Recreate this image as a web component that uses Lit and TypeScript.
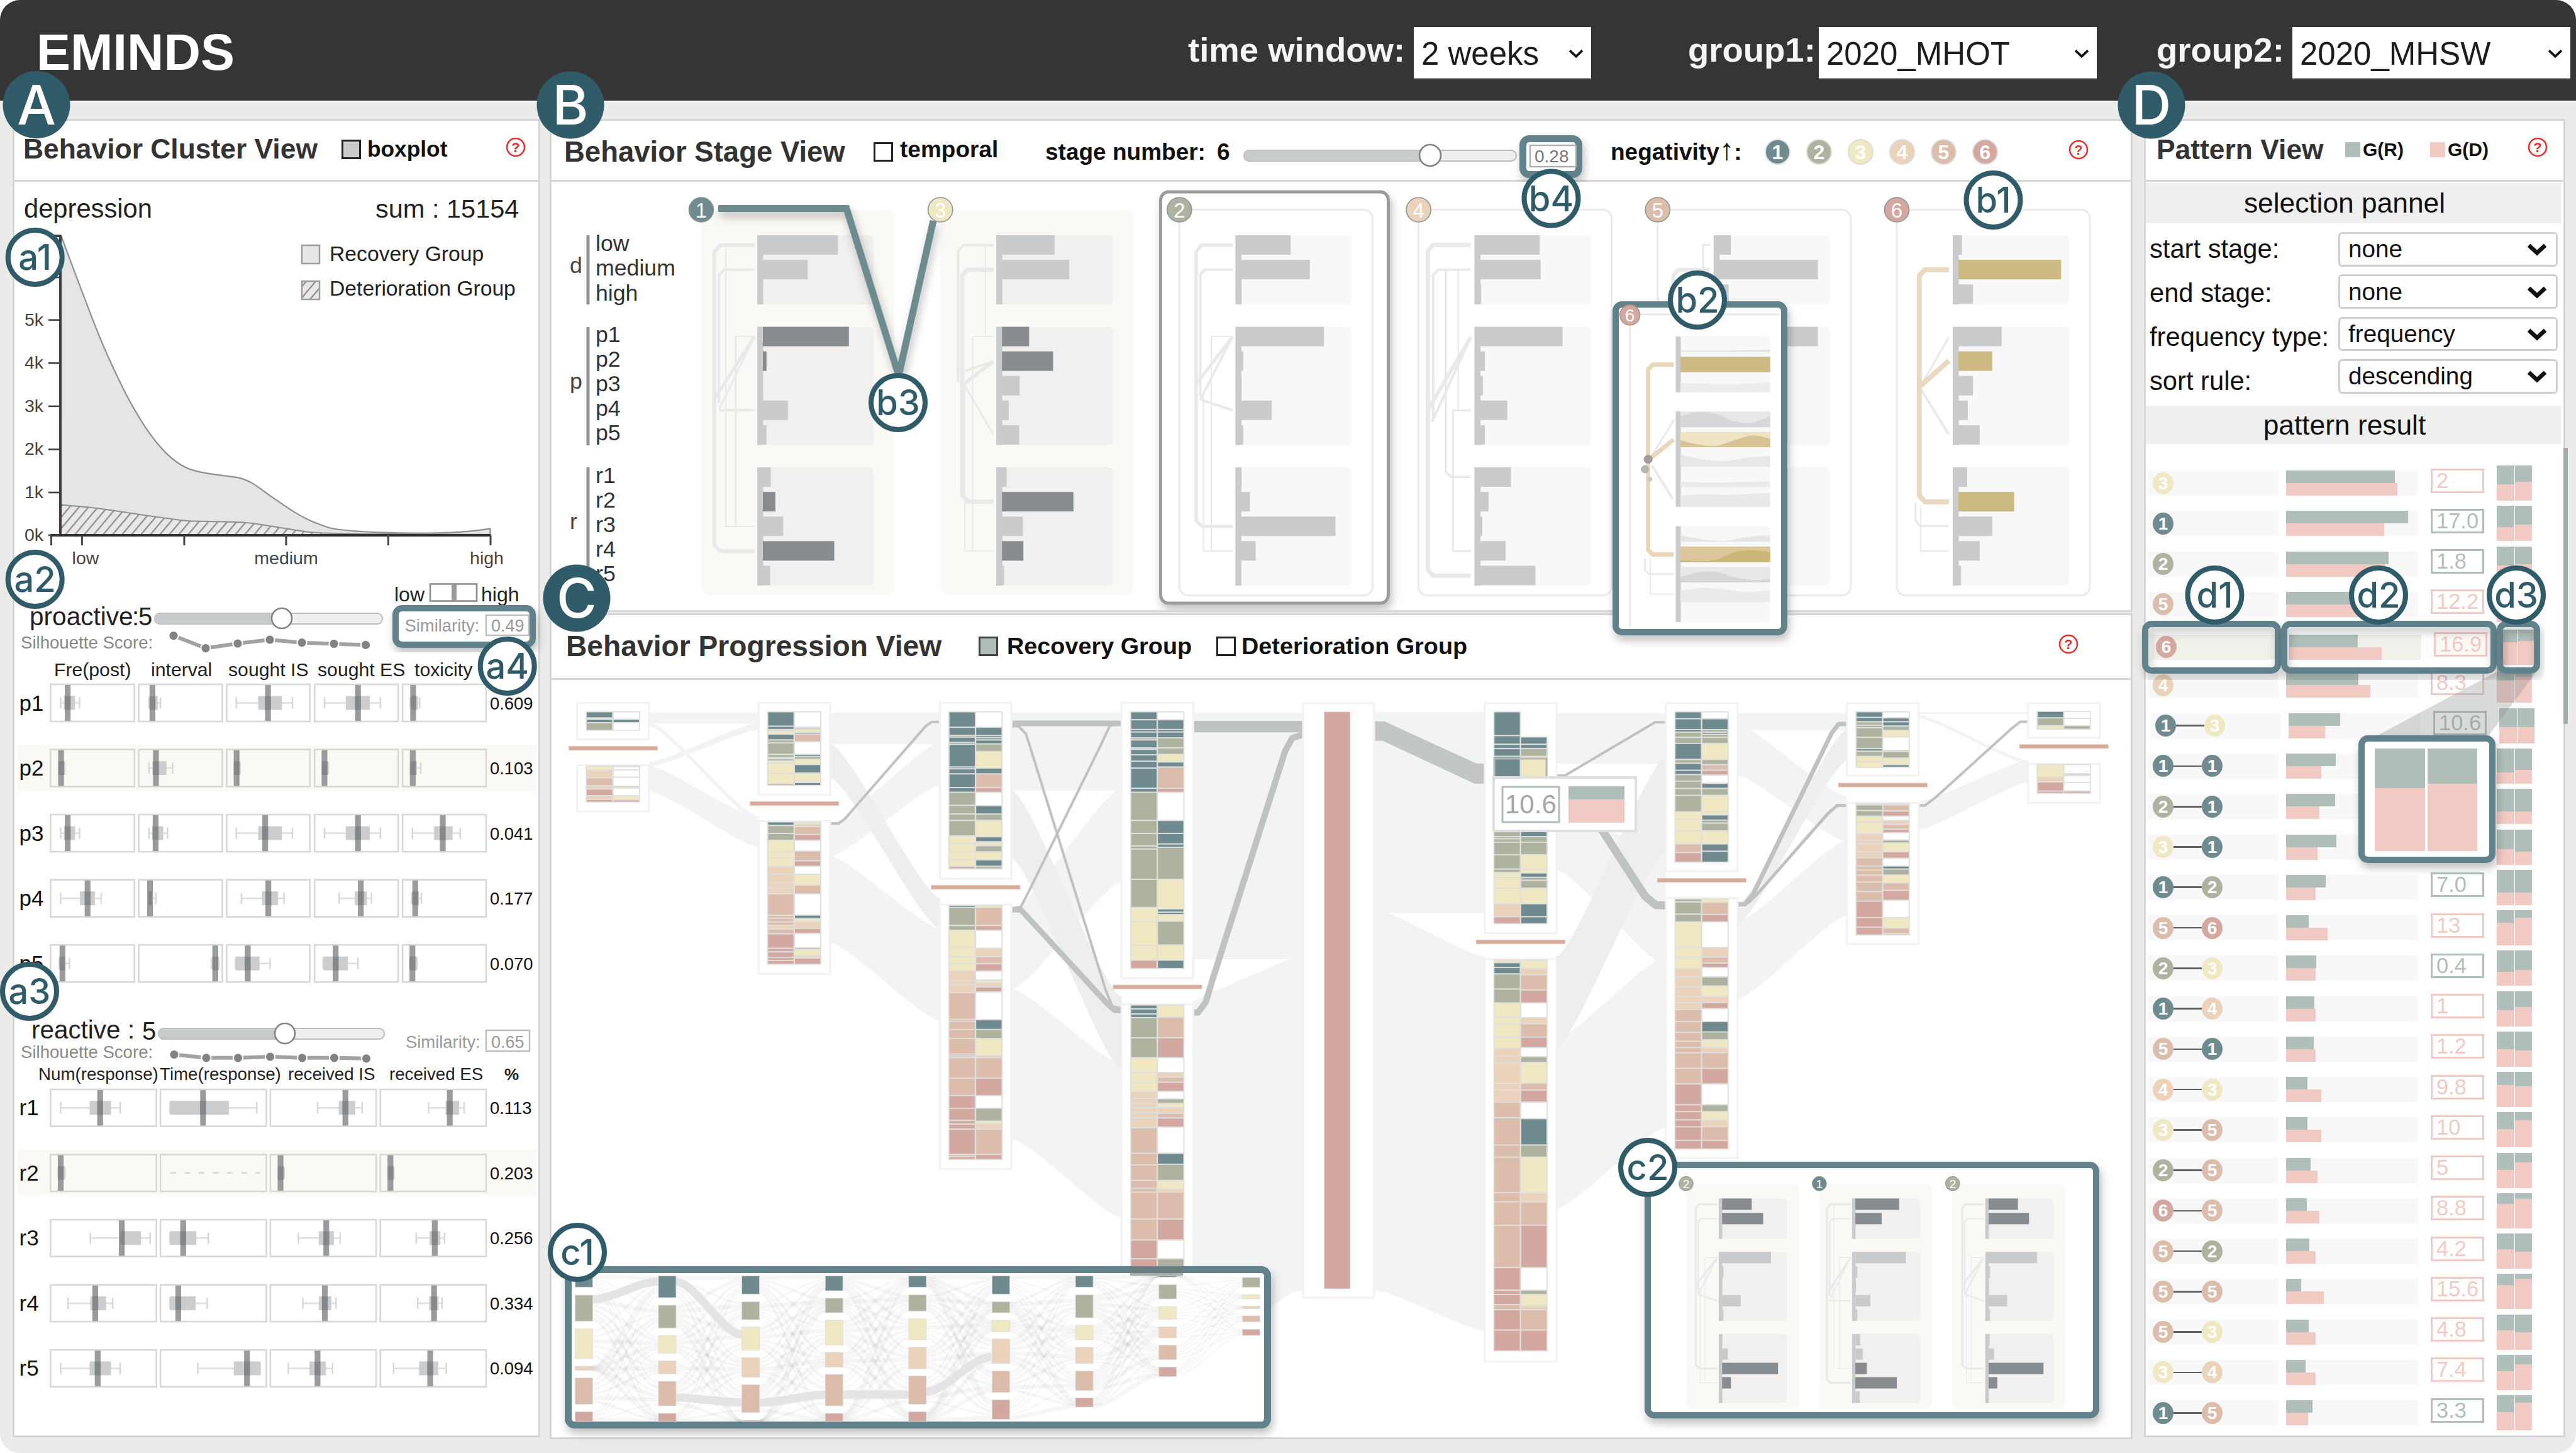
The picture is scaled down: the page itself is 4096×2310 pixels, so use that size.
import { LitElement, html, svg, css } from "lit";

type Pt = [number, number];
const SANS = "'Liberation Sans', Arial, sans-serif";
const STAGE = ["#ffffff", "#6f8b90", "#aeb3a0", "#f0e8c3", "#ead2bb", "#dcbdac", "#d3a8a1"];
const GREEN = "#b0bfb9";
const PINK = "#f2cac4";
const BAR = "#c9cbcc";
const DARK = "#868c90";
const GOLD = "#cdba82";
const RING = "#305c69";
const CALL = "#62828b";

/* ---------- drawing helpers ---------- */
const t = (x: number, y: number, s: number, str: string, o: any = {}) => svg`<text x=${x} y=${y} font-size=${s}
  fill=${o.f ?? "#222"} font-weight=${o.b ?? 400} text-anchor=${o.a ?? "start"} font-family=${o.ff ?? SANS}>${str}</text>`;
const r = (x: number, y: number, w: number, h: number, f: string, o: any = {}) => svg`<rect x=${x} y=${y} width=${Math.max(w, 0)}
  height=${Math.max(h, 0)} fill=${f} stroke=${o.s ?? "none"} stroke-width=${o.sw ?? 0} rx=${o.rx ?? 0} />`;
const line = (pts: Pt[], s: string, w: number) => svg`<polyline points=${pts.map((p) => p.join(",")).join(" ")}
  fill="none" stroke=${s} stroke-width=${w} stroke-linejoin="round" />`;
const smooth = (p: Pt[]) => {
  let d = `M${p[0][0]},${p[0][1]}`;
  for (let i = 0; i < p.length - 1; i++) {
    const a = p[i - 1] ?? p[i], b = p[i], c = p[i + 1], e = p[i + 2] ?? c;
    d += `C${b[0] + (c[0] - a[0]) / 6},${b[1] + (c[1] - a[1]) / 6} ${c[0] - (e[0] - b[0]) / 6},${c[1] - (e[1] - b[1]) / 6} ${c[0]},${c[1]}`;
  }
  return d;
};
const help = () => html`<svg class="help" viewBox="0 0 32 32"><ellipse cx="16" cy="16" rx="14" ry="14" fill="#fff" stroke="#e8322d" stroke-width="2.6"/>
  <text x="16" y="24" font-size="22" text-anchor="middle" fill="#e8322d" font-family="Liberation Sans, sans-serif">?</text></svg>`;

/* ---------- cluster view data ---------- */
const ax = (v: number) => v * 0.5548;
const pCols = [[143, 387], [396, 639], [648, 890], [900, 1143], [1152, 1395]];
const rCols = [[143, 450], [458, 765], [773, 1080], [1088, 1395]];
const pRows: [string, string, number[][]][] = [
  ["p1", "0.609", [[174, 183, 194, 215, 228], [427, 428, 437, 452, 460], [677, 740, 768, 808, 838], [930, 991, 1026, 1060, 1090], [1176, 1178, 1184, 1198, 1203]]],
  ["p2", "0.103", [[168, 168, 175, 186, 186], [427, 437, 447, 477, 495], [671, 671, 678, 688, 688], [923, 923, 930, 941, 941], [1176, 1176, 1183, 1195, 1206]]],
  ["p3", "0.041", [[174, 183, 194, 215, 228], [427, 436, 446, 468, 480], [677, 740, 760, 808, 838], [930, 991, 1026, 1060, 1090], [1182, 1244, 1269, 1297, 1319]]],
  ["p4", "0.177", [[174, 229, 251, 272, 290], [424, 424, 430, 436, 447], [692, 751, 769, 797, 814], [972, 1017, 1034, 1051, 1065], [1180, 1182, 1190, 1201, 1208]]],
  ["p5", "0.070", [[170, 171, 179, 187, 199], [606, 609, 617, 627, 627], [675, 675, 710, 744, 774], [926, 927, 962, 997, 1026], [1174, 1174, 1182, 1195, 1195]]],
];
const rRows: [string, string, number[][]][] = [
  ["r1", "0.113", [[174, 257, 287, 318, 344], [487, 487, 582, 656, 736], [910, 971, 990, 1018, 1038], [1228, 1277, 1289, 1316, 1330]]],
  ["r2", "0.203", [[167, 167, 174, 186, 186], [], [797, 797, 804, 814, 814], [1112, 1112, 1119, 1129, 1129]]],
  ["r3", "0.256", [[259, 345, 349, 404, 430], [487, 487, 525, 563, 597], [855, 914, 935, 957, 975], [1193, 1231, 1246, 1262, 1274]]],
  ["r4", "0.334", [[195, 259, 273, 304, 323], [487, 487, 511, 561, 594], [868, 914, 931, 950, 963], [1197, 1230, 1244, 1257, 1267]]],
  ["r5", "0.094", [[174, 257, 280, 318, 344], [567, 670, 708, 746, 746], [826, 887, 910, 934, 953], [1128, 1201, 1233, 1256, 1279]]],
];
const boxCell = (c: number[], b: number[], y: number, h: number) => {
  const m = y + h / 2;
  const frame = r(ax(c[0]) + 1, y, ax(c[1] - c[0]) - 2, h, "none", { s: "#d8d8d8", sw: 2.6 });
  if (!b.length) return svg`${frame}<line x1=${ax(488)} x2=${ax(745)} y1=${m} y2=${m} stroke="#d6d6d6" stroke-width="2.5" stroke-dasharray="9 13.6"/>`;
  const [w0, b0, md, b1, w1] = b.map(ax);
  return svg`${frame}${line([[w0, m], [w1, m]], "#dedede", 2.5)}${line([[w0, m - 9], [w0, m + 9]], "#d8d8d8", 2.5)}${line([[w1, m - 9], [w1, m + 9]], "#d8d8d8", 2.5)}
    ${r(b0, m - 11, b1 - b0, 22, "#cbcdce")}<rect x=${md - 4.6} y=${y + 1} width="9.2" height=${h - 2} fill="#999c9c"/>
    <rect x=${Math.max(md - 4.6, b0)} y=${m - 11} width=${Math.min(md + 4.6, b1) - Math.max(md - 4.6, b0)} height="22" fill="#85888a"/>`;
};
const boxRows = (rows: typeof pRows, cols: number[][], y0: number, h: number) =>
  rows.map(([n, v, bs], i) => {
    const y = y0 + i * 103.55;
    return svg`${i === 1 ? r(28, y - 8, 826, h + 15, "#faf9f4") : ""}${t(30.5, y + h / 2 + 12, 35, n, { f: "#111" })}${cols.map((c, j) => boxCell(c, bs[j], y, h))}${t(779, y + h / 2 + 10, 27.4, v, { f: "#111" })}`;
  });
const slider = (x0: number, x1: number, y: number, tx: number, rr = 16) => svg`
  ${r(x0, y - 8, x1 - x0, 17, "#eeeeee", { rx: 8, s: "#b9bdbb", sw: 2 })}<path d=${`M${tx},${y - 7.5}H${x0 + 8}a8,8 0 0 0 0,16H${tx}z`} fill="#c8cbcc"/>
  <circle cx=${tx} cy=${y} r=${rr} fill="#fff" stroke="#808584" stroke-width="2.6"/>`;
const silhouette = (pts: Pt[]) => svg`${line(pts, "#a1a3a2", 6)}${pts.map(([x, y]) => svg`<circle cx=${x} cy=${y} r="7.6" fill="#808284" stroke="#fff" stroke-width="2"/>`)}`;

const density: Pt[] = ([[175, 612], [235, 757], [290, 885], [340, 985], [380, 1055], [430, 1127], [480, 1180], [530, 1213], [580, 1227], [640, 1235], [690, 1242], [725, 1256], [780, 1291], [830, 1322], [880, 1348], [920, 1363], [970, 1375], [1100, 1383], [1250, 1384], [1340, 1380], [1405, 1373]] as Pt[]).map(([x, y]) => [ax(x), y * 0.6122]);
const density2: Pt[] = ([[175, 1311], [250, 1317], [320, 1325], [400, 1336], [530, 1352], [600, 1354], [700, 1357], [760, 1364], [850, 1377], [920, 1384], [1100, 1387], [1405, 1388]] as Pt[]).map(([x, y]) => [ax(x), y * 0.6122]);

const clusterChart = () => {
  const base = 851;
  return svg`
  <defs><pattern id="hatch" width="11.5" height="11.5" patternUnits="userSpaceOnUse" patternTransform="rotate(40)"><rect width="12" height="12" fill="#e9e8e7"/><line x1="5" x2="5" y1="-1" y2="13" stroke="#8f8b8a" stroke-width="2.2"/></pattern></defs>
  ${t(38, 346, 41.7, "depression")}${t(597, 346, 41.5, "sum : 15154")}
  ${r(480, 390, 28, 29, "#e6e6e6", { s: "#9aa09e", sw: 2.5 })}${r(480, 447, 28, 29, "url(#hatch)", { s: "#9aa09e", sw: 2.5 })}
  ${t(524, 415, 33.7, "Recovery Group")}${t(524, 470, 33.7, "Deterioration Group")}
  <path d=${smooth(density) + `V${base}H97z`} fill="#e5e5e5" stroke="#8b9090" stroke-width="2.2"/>
  <path d=${smooth(density2) + `V${base}H97z`} fill="url(#hatch)" stroke="#8b9090" stroke-width="2"/>
  ${line([[80, 375], [96, 375], [96, base]], "#3b4040", 4)}${line([[80, base], [780, base]], "#2e3232", 4)}
  ${[831, 943, 1055, 1167, 1279, 1390].map((y, i) => svg`${line([[77, y * 0.6122], [95, y * 0.6122]], "#3b4040", 2.6)}${t(69, y * 0.6122 + 9, 28.5, `${5 - i}k`, { a: "end", f: "#444" })}`)}
  ${line([[77, 441], [95, 441]], "#3b4040", 2.6)}
  ${[147, 235, 528, 820, 1113, 1406].map((x) => line([[ax(x), base], [ax(x), 867]], "#444", 3))}
  ${t(136, 897, 28.5, "low", { a: "middle", f: "#444" })}${t(455, 897, 28.5, "medium", { a: "middle", f: "#444" })}${t(774, 897, 28.5, "high", { a: "middle", f: "#444" })}
  ${t(627, 956, 32, "low")}${r(684, 928.5, 74, 27, "#fff", { s: "#8b9090", sw: 2.6 })}${r(718, 929, 8, 27, "#989b9b")}${t(765, 956, 32, "high")}
  ${t(47, 994, 40.6, "proactive")}${t(210, 994, 40, ":")}${t(220, 994, 40, "5")}
  ${slider(246, 608, 983, 448)}
  ${t(33, 1031, 27.6, "Silhouette Score:", { f: "#888" })}
  ${silhouette([[276, 1010.6], [327, 1030.5], [378, 1023], [429, 1017], [480, 1021.7], [531, 1023.5], [581.5, 1025.4]])}
  ${[["Fre(post)", 86], ["interval", 240], ["sought IS", 363], ["sought ES", 505], ["toxicity", 659]].map(([s, x]) => t(x as number, 1074.5, 30.2, s as string))}
  ${boxRows(pRows, pCols, 1088, 59)}
  ${t(50, 1651, 40.4, "reactive")}${t(203, 1651, 40, ":")}${t(226, 1653, 40, "5")}
  ${slider(252, 611, 1643, 453)}
  ${t(33, 1682, 27.6, "Silhouette Score:", { f: "#888" })}${t(645, 1666, 27.4, "Similarity:", { f: "#999" })}
  ${r(773, 1638, 69, 33, "#fff", { s: "#b9bdbb", sw: 2.4 })}${t(781, 1666, 27, "0.65", { f: "#999" })}
  ${silhouette([[277, 1676.5], [328, 1681.8], [378.5, 1681.8], [429.5, 1680], [480.5, 1681.8], [531.5, 1681.8], [582.5, 1682.8]])}
  ${[["Num(response)", 61], ["Time(response)", 254], ["received IS", 458], ["received ES", 619]].map(([s, x]) => t(x as number, 1717, 27.7, s as string))}
  ${t(802, 1717, 26, "%", { b: 700 })}
  ${boxRows(rRows, rCols, 1732, 58.5)}`;
};

/* ---------- stage cards: lengths in px, a trailing colour key marks emphasised bars ---------- */
type Bar = number | [number, string];
interface Card { n: number; look: "cream" | "plain"; d: Bar[]; p: Bar[]; r: Bar[]; links: [number, string, Pt[]][]; }
const G = "#e9e9ea";
const k = DARK;
const sx = (u: number) => u * 0.8291;
const sc = (a: Bar[]): Bar[] => a.map((v) => (typeof v === "number" ? sx(v) : [sx(v[0]), v[1]]) as Bar);
const L4 = (pts: Pt[]): Pt[] => pts.map(([x, y]) => [sx(x), (y - 287) * 0.5357]);
const L5 = (pts: Pt[]): Pt[] => pts.map(([x, y]) => [sx(x), (y - 280.5) * 0.5485]);
const linksOne: Card["links"] = [
  [6, G, L4([[102, 392], [37, 392], [25, 412], [25, 1282], [37, 1300], [102, 1300]])], [4, G, L4([[102, 465], [44, 465], [34, 480], [34, 860]])],
  [2, G, L4([[47, 400], [47, 1227], [102, 1227]])], [2.5, G, L4([[102, 663], [66, 663], [66, 1227]])],
  [5, G, L4([[27, 845], [102, 663]])], [3, G, L4([[34, 880], [102, 663]])], [4, G, L4([[34, 882], [102, 882]])]];
const linksTwo: Card["links"] = [
  [5.5, G, L4([[102, 392], [42, 392], [32, 412], [32, 1210], [44, 1227], [102, 1227]])], [4, G, L4([[102, 465], [48, 465], [40, 480], [40, 840]])],
  [2, G, L4([[46, 840], [46, 1300], [102, 1300]])], [2, G, L4([[102, 663], [61, 663], [61, 1300]])],
  [5, G, L4([[32, 805], [102, 663]])], [4, G, L4([[40, 850], [102, 663]])], [4, G, L4([[40, 850], [102, 882]])]];
const cards: Card[] = [
  { n: 1, look: "cream", d: sc([144, 86, 0]), p: sc([[165, k], [7, k], 0, 48, 7]), r: sc([15, [24, k], 39, [137, k], 14]), links: linksOne },
  { n: 3, look: "cream", d: sc([101, 129, 0]), p: sc([[52, k], [98, k], 34, 13, 33]), r: sc([9, [137, k], 40, [41, k], 4]), links: [
    [4, G, L4([[102, 392], [44, 392], [34, 410], [34, 800]])], [2, G, L4([[87, 392], [87, 663], [102, 663]])],
    [7, G, L4([[102, 465], [52, 465], [42, 482], [42, 1135], [54, 1153], [102, 1153]])], [2, G, L4([[102, 663], [62, 663], [62, 1300], [102, 1300]])],
    [2, G, L4([[47, 800], [47, 1300], [62, 1300]])], [6, G, L4([[42, 808], [102, 737]])], [4, G, L4([[38, 770], [102, 737]])], [3, G, L4([[48, 812], [102, 955]])]] },
  { n: 2, look: "plain", d: sc([95, 132, 1]), p: sc([159, 4, 1, 59, 4]), r: sc([1, 17, 181, 28, 0]), links: linksTwo },
  { n: 4, look: "plain", d: sc([114, 116, 2]), p: sc([158, 9, 5, 52, 9]), r: sc([59, 16, 4, 49, 106]), links: [
    [7, G, L5([[100, 382], [28, 382], [18, 400], [18, 1325], [28, 1341], [100, 1341]])], [4, G, L5([[100, 454], [38, 454], [28, 470], [28, 890]])],
    [3.5, G, L5([[52, 454], [52, 1040], [62, 1055], [100, 1055]])], [2, G, L5([[76, 454], [76, 862]])],
    [3, G, L5([[100, 862], [66, 862], [66, 1270], [100, 1270]])], [6, G, L5([[18, 860], [100, 650]])], [4, G, L5([[26, 895], [100, 650]])]] },
  { n: 5, look: "plain", d: sc([22, 189, 18]), p: sc([189, 10, 10, 40, 10]), r: sc([10, 20, 60, 30, 10]), links: [
    [6, G, L5([[100, 454], [40, 454], [30, 470], [30, 900]])], [3, G, L5([[100, 382], [87, 382], [87, 450]])]] },
  { n: 6, look: "plain", d: sc([7, [197, GOLD], 28]), p: sc([83, [65, GOLD], 28, 18, 41]), r: sc([17, [107, GOLD], 65, 41, 5]), links: [
    [3, G, L5([[46, 790], [100, 650]])], [4, G, L5([[46, 800], [100, 932]])],
    [3, G, L5([[36, 1130], [36, 1180], [44, 1197], [100, 1197]])], [2, G, L5([[46, 1140], [46, 1270], [100, 1270]])],
    [8, "#ead9c0", L5([[100, 454], [54, 454], [43, 472], [43, 1108], [54, 1127], [100, 1127]])], [8, "#ead9c0", L5([[45, 792], [100, 718]])]] },
];
const c1 = 0.917;
const mini = (a: Bar[]): Bar[] => a.map((v) => (typeof v === "number" ? v * c1 : [v[0] * c1, v[1]]) as Bar);
const detailCards: Card[] = [
  { n: 2, look: "cream", d: mini([[88, k], [122, k], 0]), p: mini([145, 4, 1, 55, 4]), r: mini([1, 17, [166, k], [26, k], 1]), links: linksTwo },
  { n: 1, look: "cream", d: mini([[130, k], [78, k], 0]), p: mini([150, 6, 2, 44, 6]), r: mini([14, 22, [34, k], [123, k], 13]), links: linksOne },
  { n: 2, look: "cream", d: mini([[87, k], [120, k], 0]), p: mini([144, 4, 1, 55, 4]), r: mini([3, 16, [163, k], [26, k], 0]), links: linksTwo },
];
const card = (c: Card, x: number, y: number, s = 1) => svg`<g transform=${`translate(${x},${y}) scale(${s})`}>
  ${c.look === "cream" ? r(0, 0, 307, 613, "#faf9f5", { rx: 14 }) : r(0, 0, 307, 613, "#fff", { rx: 14, s: "#ebebeb", sw: 3 })}
  ${([[c.d, 40.5, 110], [c.p, 186, 188], [c.r, 409.5, 188]] as [Bar[], number, number][]).map(([bars, gy, gh]) => svg`
    ${r(89, gy, 185, gh, c.look === "cream" ? "#f1f0ee" : "#f8f8f8", { rx: 7 })}
    ${r(89, gy, 9.5, gh, BAR)}
    ${bars.map((b, i) => { const [w, f] = typeof b === "number" ? [b, BAR] : b; return r(98, gy + i * 39.1, w, 31, f); })}`)}
  ${c.links.map(([w, col, pts]) => line(pts, col, w))}
  <circle cx="0" cy="0" r="19.5" fill=${STAGE[c.n]} stroke="#8f938f" stroke-width="1.6"/>
  <text x="0" y="12" font-size="33" fill="#fff" text-anchor="middle" font-family=${SANS}>${c.n}</text>
</g>`;

const stageChart = () => svg`
  ${t(906, 434, 35.7, "d", { f: "#444" })}${t(906, 618, 35.7, "p", { f: "#444" })}${t(906, 841, 35.7, "r", { f: "#444" })}
  ${line([[935, 374], [935, 484]], "#8f9494", 5)}${line([[935, 520], [935, 708]], "#8f9494", 5)}${line([[935, 743], [935, 931]], "#8f9494", 5)}
  ${["low", "medium", "high"].map((s, i) => t(947, 398.6 + i * 39.5, 35.7, s, { f: "#333" }))}
  ${[0, 1, 2, 3, 4].map((i) => svg`${t(947, 544 + i * 39, 35.7, `p${i + 1}`, { f: "#333" })}${t(947, 768 + i * 39, 35.7, `r${i + 1}`, { f: "#333" })}`)}
  <rect x="1845.5" y="305" width="362" height="654" rx="13" fill="#fff" stroke="#9a9c9a" stroke-width="5" filter="url(#soft)"/>
  ${cards.map((c, i) => card(c, 1115 + i * 380.2, 333.5))}`;

/* ---------- progression view: "y key y key ... y" runs of stage blocks ---------- */
const px = (v: number) => 860 + v * 0.7015, py = (v: number) => 1080 + v * 0.574;
const qx = (v: number) => 1900 + v * 0.9566, qy = (v: number) => 1080 + v * 0.6888;
const colsLeft: [number, [number, number], string, string, number, [number, number], string, string][] = [
  [103, [65, 166], "90 1 107 0 111 1 120 2 141", "90 0 111 1 120 0 141", 191, [238, 366], "240 3 252 4 273 5 295 4 304 6 322 4 333 6 340", "240 3 242 0 251 0 271 0 296 4 301 0 323 3 334 6 340"],
  [514, [65, 320], "90 1 130 1 139 2 143 3 152 1 168 2 176 2 208 2 217 1 220 2 226 3 232 3 262 3 289 6 294", "90 0 133 2 138 3 147 1 152 5 173 0 208 1 214 2 222 3 236 1 260 3 283 2 286 1 294", 344, [393, 816],
    "395 1 405 2 427 2 446 3 478 3 495 3 518 4 540 4 563 4 578 4 594 5 654 5 662 5 672 5 682 4 692 5 705 6 745 6 755 6 770 6 779 6 789", "395 3 402 4 408 5 430 6 446 0 476 5 503 6 518 0 540 3 570 5 594 0 653 1 663 3 672 4 690 6 704 0 744 2 749 3 766 4 772 6 789"],
  [925, [65, 552], "90 1 133 1 155 2 160 1 175 1 180 1 243 1 248 1 262 1 300 1 313 2 349 2 373 2 391 2 434 3 455 3 478 3 500 3 518 6 525", "90 0 133 1 156 1 162 1 168 1 179 2 200 3 246 1 262 5 300 6 313 0 350 1 373 2 391 3 436 1 450 2 452 3 461 2 478 3 500 1 518 2 525", 576, [624, 1356],
    "626 1 632 2 682 2 695 3 743 3 768 3 788 3 808 4 835 4 845 4 868 5 942 6 947 5 970 5 995 5 1038 6 1043 5 1048 5 1105 5 1153 6 1188 6 1222 6 1232 6 1246 6 1316 5 1322 6 1330", "626 3 632 5 682 6 695 0 745 4 768 5 788 6 808 0 833 3 840 4 852 6 866 0 943 1 970 2 995 3 1043 5 1048 5 1105 6 1153 0 1188 2 1224 3 1230 4 1246 5 1316 6 1330"],
  [1337, [65, 828], "90 1 112 1 139 1 146 1 162 2 168 1 190 1 194 1 209 1 227 1 246 1 302 1 313 2 391 2 427 2 462 2 470 2 554 2 632 3 670 3 738 3 778 6 801", "90 0 112 1 139 1 146 1 162 2 190 2 208 3 229 1 243 5 302 6 313 0 391 1 427 1 456 1 465 2 554 3 636 1 645 1 652 3 670 2 736 3 778 1 801", 852, [900, 1660],
    "902 1 913 1 927 1 937 2 993 2 1048 3 1089 3 1116 3 1142 4 1160 4 1175 4 1186 4 1200 4 1215 4 1242 5 1313 5 1345 5 1388 5 1410 5 1420 5 1495 5 1553 6 1605 6 1652", "902 3 936 5 993 6 1048 0 1089 4 1102 5 1116 6 1141 0 1162 2 1175 3 1186 4 1202 5 1215 6 1240 0 1313 1 1343 2 1388 3 1412 4 1420 5 1495 6 1553 0 1605 2 1652"],
];
const colsRight: typeof colsLeft = [
  [497, [55, 586], "75 1 130 1 150 1 160 1 178 1 225 1 350 2 363 2 368 2 376 2 405 2 438 2 446 3 458 3 482 3 518 4 548 6 564", "133 1 150 1 160 2 178 3 225 2 350 1 363 2 376 2 405 3 438 3 447 1 457 2 464 2 482 3 518 1 548 1 564", 606, [646, 1575],
    "648 3 654 1 665 1 680 2 715 2 747 3 780 3 795 3 826 3 852 4 870 4 885 4 932 4 948 4 976 5 1012 5 1075 5 1103 5 1185 5 1206 5 1260 5 1358 6 1410 6 1420 6 1443 5 1455 6 1502 6 1550", "648 3 667 4 682 5 717 6 747 0 781 4 795 5 826 6 850 0 871 2 884 3 932 5 948 6 976 0 1014 1 1075 2 1103 3 1185 4 1206 5 1260 6 1358 0 1410 2 1420 3 1446 4 1455 5 1502 6 1550"],
  [798, [55, 443], "75 1 91 1 116 1 122 2 134 2 148 1 185 2 194 1 210 1 220 2 235 2 252 2 268 2 306 3 325 3 350 3 380 5 400 6 422", "75 0 91 1 116 2 122 1 127 2 134 2 148 3 185 2 197 5 210 6 221 0 240 1 252 2 268 3 306 3 313 1 325 2 332 2 350 3 380 1 397 1 422", 464, [505, 1105],
    "507 2 514 2 542 2 560 3 618 3 641 3 668 4 687 4 710 4 732 4 746 4 762 5 790 5 815 5 835 5 850 5 862 5 898 5 934 6 982 6 998 6 1017 6 1033 6 1064 6 1084", "507 3 515 5 543 6 560 0 619 4 641 5 655 6 665 0 687 2 708 3 732 4 746 6 760 0 790 1 814 2 832 3 850 4 862 5 898 6 934 0 982 2 998 3 1018 4 1033 5 1064 6 1084"],
  [1099, [55, 222], "75 1 88 1 98 2 106 2 112 2 134 2 160 1 166 2 178 3 190 3 203", "75 0 89 1 98 1 108 2 118 3 133 0 164 1 167 2 182 3 197 1 203", 244, [285, 611],
    "287 3 290 2 303 2 316 3 330 3 356 4 372 4 380 4 398 4 412 5 431 5 440 5 452 5 468 5 490 5 512 6 550 6 572 6 590", "287 4 290 5 304 6 316 0 326 4 335 5 346 6 354 0 371 2 378 3 398 6 413 0 431 1 438 2 452 3 470 5 487 6 510 0 550 3 574 5 587 6 590"],
  [1400, [55, 135], "74 1 89 2 107 3 115", "74 0 90 0 107 2 115", 155, [195, 285], "197 3 225 4 237 6 258 6 263", "197 0 218 4 222 0 238 0 258 6 263"],
];
const run = (spec: string, x: number, w: number, fy: (n: number) => number) => {
  const a = spec.split(" ").map(Number);
  const out = [];
  for (let i = 0; i + 2 < a.length; i += 2) {
    const y = fy(a[i]);
    out.push(r(x, y, w, fy(a[i + 2]) - y, STAGE[a[i + 1]], { s: "#dfdfdd", sw: 1.8 }));
  }
  return out;
};
const column = (c: (typeof colsLeft)[0], fx: (n: number) => number, fy: (n: number) => number) => {
  const x = fx(c[0]);
  const frame = ([a, b]: [number, number]) => r(x - 14.5, fy(a), 114, fy(b) - fy(a), "#fff", { s: "#f1f2f3", sw: 3 });
  return svg`${frame(c[1])}${frame(c[5])}${run(c[2], x, 42, fy)}${run(c[3], x + 42.5, 42, fy)}${run(c[6], x, 42, fy)}${run(c[7], x + 42.5, 42, fy)}
    ${r(x - 28, fy(c[4]) - 3, 141, 6, "#d9aa9c", { s: "#e2c4b8", sw: 1 })}`;
};
const FL = "#f2f3f5";
const flow = (fx: any, fy: any, x0: number, a0: number, a1: number, x1: number, b0: number, b1: number, f = FL) => {
  const X0 = fx(x0), X1 = fx(x1), w = (X1 - X0) * 0.16;
  return svg`<path d=${`M${X0},${fy(a0)}C${X0 + w},${fy(a0)} ${X1 - w},${fy(b0)} ${X1},${fy(b0)}V${fy(b1)}C${X1 - w},${fy(b1)} ${X0 + w},${fy(a1)} ${X0},${fy(a1)}z`} fill=${f}/>`;
};
const lk = (fx: any, fy: any, w: number, pts: Pt[]) => line(pts.map(([x, y]) => [fx(x), fy(y)]), "#bec2c2", w);
const progressionChart = () => {
  const a = (...n: number[]) => (flow as any)(px, py, ...n);
  const b = (...n: number[]) => (flow as any)(qx, qy, ...n);
  const dn = "#eeeeef";
  return svg`
  ${a(245, 92, 122, 495, 92, 122)}${a(245, 118, 130, 495, 380, 395)}${a(245, 228, 242, 495, 120, 140)}${a(245, 240, 310, 495, 385, 465)}
  ${a(656, 92, 180, 905, 92, 180)}${a(656, 400, 490, 905, 175, 295)}${a(656, 490, 730, 905, 690, 945)}${flow(px, py, 656, 180, 275, 905, 605, 690, dn)}
  ${a(1067, 92, 308, 1317, 92, 308)}${a(1067, 640, 858, 1317, 300, 562)}${a(1067, 858, 1273, 1317, 1065, 1490)}${flow(px, py, 1067, 308, 498, 1317, 880, 1080, dn)}
  <path d=${`M1896,${py(92)}H2072V${qy(646)}H1896z`} fill=${FL}/><path d=${`M1896,${qy(745)}L1915,${qy(730)}L2050,${qy(646)}H2072V${qy(1410)}C2040,${qy(1410)} 1990,2110 1940,2160H1896z`} fill=${FL}/>
  <path d=${`M2185,${qy(76)}H2361V${qy(540)}H2185z`} fill=${FL}/>${b(298, 530, 1410, 482, 640, 1503)}
  ${b(600, 78, 195, 783, 78, 195)}${b(600, 830, 1222, 783, 640, 1035)}${b(600, 300, 440, 783, 400, 660)}${flow(qx, qy, 600, 640, 850, 783, 180, 400, dn)}
  ${b(901, 78, 117, 1084, 78, 117)}${b(901, 105, 222, 1084, 270, 375)}${b(901, 560, 738, 1084, 372, 546)}${flow(qx, qy, 901, 520, 565, 1084, 117, 190, dn)}
  ${b(1202, 76, 80, 1386, 76, 80)}${b(1202, 82, 90, 1386, 187, 195)}${b(1202, 282, 347, 1386, 187, 238)}
  ${lk(px, py, 4, [[656, 399], [675, 399], [688, 388], [872, 130], [886, 118], [905, 118]])}
  ${lk(px, py, 9, [[1067, 122], [1317, 122]])}
  ${lk(px, py, 4, [[1067, 130], [1083, 130], [1100, 152], [1280, 860], [1295, 905], [1317, 912]])}
  ${lk(px, py, 4, [[1067, 635], [1088, 630], [1105, 590], [1270, 180], [1290, 128], [1317, 125]])}
  ${lk(px, py, 9, [[1067, 638], [1088, 638], [1285, 900], [1300, 916], [1317, 918]])}
  ${lk(px, py, 18, [[1478, 131], [1728, 131]])}
  ${lk(qx, qy, 10, [[-12, 769], [5, 769], [18, 745], [30, 690], [150, 165], [162, 135], [180, 128]])}
  <path d=${"M" + [[298, 97], [315, 97], [468, 194], [482, 194], [482, 241], [465, 241], [312, 142], [298, 142]].map(([x, y]) => `${qx(x)},${qy(y)}`).join("L") + "z"} fill="#c3c6c6"/>
  ${lk(qx, qy, 4, [[600, 222], [615, 222], [765, 99], [783, 99]])}
  ${lk(qx, qy, 13, [[672, 340], [680, 355], [748, 500], [766, 521], [783, 522]])}
  ${lk(qx, qy, 7, [[901, 519], [914, 519], [928, 495], [1058, 125], [1070, 103], [1084, 103]])}
  ${lk(qx, qy, 5, [[901, 522], [920, 515], [935, 495], [1052, 310], [1068, 291], [1084, 291]])}
  ${lk(qx, qy, 4, [[1202, 291], [1214, 291], [1235, 268], [1358, 113], [1372, 98], [1386, 98]])}
  ${colsLeft.map((c) => column(c, px, py))}
  ${r(2072, 1118, 113, 945, "#fff", { s: "#f1f2f3", sw: 3 })}${r(2105.7, 1131.7, 41, 917, STAGE[6])}
  ${colsRight.map((c) => column(c, qx, qy))}
  ${r(2376, 1206, 83, 31, "none", { s: "#b5b8b8", sw: 3 })}
  <rect x="2375" y="1236" width="226" height="85" fill="#fff" stroke="#dfdfdf" stroke-width="4"/>
  ${r(2389, 1251, 90, 56, "#fff", { s: "#b4bcb9", sw: 3 })}${t(2393, 1293, 42, "10.6", { f: "#a3a8a6" })}${r(2494, 1250, 89, 21, GREEN)}${r(2494, 1271, 89, 37, PINK)}`;
};

/* ---------- cluster-flow detail ---------- */
const hx = (v: number) => 860 + v * 0.7653, hy = (v: number) => 1900 + v / 3;
const sank = [
  "385 439 1 477 601 2 637 780 3 816 836 4 872 997 5 1033 1080 6", "385 489 1 525 634 2 670 755 3 791 852 4 888 1005 5 1041 1080 6",
  "385 472 1 509 594 2 629 740 3 775 868 4 904 1037 5 1074 1080 6", "385 456 1 492 561 2 597 715 3 750 820 4 855 1005 5 1041 1080 6",
  "385 439 1 476 553 2 589 690 3 726 828 4 862 997 5 1033 1080 6", "385 472 1 509 561 2 597 651 3 686 803 4 839 941 5 976 1069 6",
  "385 439 1 476 585 2 621 690 3 726 803 4 839 932 5 967 1011 6", "385 391 1 427 495 2 532 592 3 628 681 4 716 785 5 820 865 6",
  "393 439 2 475 495 3 530 542 4 576 604 5 640 669 6"].map((s) => { const n = s.split(" ").map(Number); const o: number[][] = []; for (let i = 0; i < n.length; i += 3) o.push(n.slice(i, i + 3)); return o; });
const curve = (x0: number, y0: number, x1: number, y1: number, w: number, c: string) => {
  const m = (x1 - x0) * 0.3;
  return svg`<path d=${`M${x0},${y0}C${x0 + m},${y0} ${x1 - m},${y1} ${x1},${y1}`} fill="none" stroke=${c} stroke-width=${w}/>`;
};
const sankey = () => {
  const links = [];
  for (let i = 0; i < 8; i++) {
    sank[i].forEach((s, a) => sank[i + 1].forEach((e, b) => {
      const y0 = s[0] + ((s[1] - s[0]) * (b + 0.5)) / sank[i + 1].length, y1 = e[0] + ((e[1] - e[0]) * (a + 0.5)) / sank[i].length;
      const w = i > 6 ? 1.8 : a === b ? 6.5 : 2 + ((a * 3 + b * 5 + i) % 5);
      links.push(curve(hx(107 + i * 173.3), hy(y0), hx(244 + i * 173.3), hy(y1), w, "rgba(90,90,90,.055)"));
    }));
  }
  const hot: number[][] = [[107, 497, 244, 412], [281, 415, 418, 665], [281, 965, 418, 988], [454, 990, 591, 952], [627, 950, 764, 950], [800, 938, 937, 770]];
  return svg`${links}${hot.map(([a, b, c, d]) => curve(hx(a), hy(b), hx(c), hy(d), 13, "#e4e4e4"))}
    ${sank.map((col, i) => col.map(([a, b, c]) => r(hx(71 + i * 173.3), hy(a), 28, hy(b) - hy(a), STAGE[c], { s: "#ddd", sw: 0.8 })))}`;
};

/* ---------- temporal stage detail ---------- */
const ux = (v: number) => 2100 + v * 0.8291, uy = (v: number) => 180 + v * 0.5485;
const wave = (ys: number[], bot: number, f: string) => svg`<path d=${smooth(ys.map((y, i) => [ux(690 + (172 * i) / (ys.length - 1)), uy(y)] as Pt)) + `V${uy(bot)}H${ux(690)}z`} fill=${f}/>`;
const temporal = () => svg`
  ${line([[ux(593), uy(1490)], [ux(593), uy(583)], [ux(880), uy(583)]], "#e9e9e9", 3)}
  ${[[647, 809], [864, 1141], [1197, 1475]].map(([a, b]) => svg`${r(ux(681), uy(a), 150, uy(b) - uy(a), "#f8f8f8", { rx: 4 })}${r(ux(681), uy(a), 8, uy(b) - uy(a), BAR)}`)}
  ${wave([688, 688, 685], 692, "#e2e3e3")}${r(ux(690), uy(706), 142.6, uy(751) - uy(706), GOLD)}${wave([782, 784, 785, 784, 779], 809, "#ececeb")}
  ${r(ux(690), uy(864), 142.6, 25, "#e8e8e8")}${wave([878, 866, 872, 893, 897, 878], 910, "#d6d7d7")}
  ${r(ux(690), uy(924), 142.6, uy(968) - uy(924), "#eee4c4")}${wave([948, 960, 964, 948, 934, 943], 968, "#d9c395")}
  ${wave([989, 1003, 1008, 998, 993], 1025, "#e8e8e7")}${wave([1068, 1070, 1070, 1068, 1066], 1084, "#ebebeb")}${wave([1108, 1105, 1106, 1103, 1101], 1141, "#e9e9e8")}
  ${wave([1223, 1235, 1239, 1228, 1223], 1242, "#e6e6e6")}${r(ux(690), uy(1256), 142.6, uy(1301) - uy(1256), "#dcc79d")}${wave([1296, 1298, 1294, 1272, 1267, 1272], 1301, "#cbb678")}
  ${r(ux(690), uy(1315), 142.6, 24.5, "#e8e8e8")}${wave([1345, 1330, 1329, 1345, 1353, 1350], 1360, "#d6d7d7")}${wave([1383, 1375, 1380, 1388, 1382], 1417, "#ebebea")}
  ${line([[ux(677), uy(890)], [ux(632), uy(1000)]], G, 3)}${line([[ux(635), uy(1020)], [ux(675), uy(1118)]], G, 4)}
  ${line([[ux(622), uy(1290)], [ux(622), uy(1325)], [ux(630), uy(1336)], [ux(677), uy(1336)]], G, 3)}${line([[ux(632), uy(1290)], [ux(632), uy(1394)], [ux(677), uy(1394)]], G, 2)}
  ${line([[ux(677), uy(729)], [ux(637), uy(729)], [ux(628), uy(742)], [ux(628), uy(1266)], [ux(637), uy(1279)], [ux(677), uy(1279)]], "#ead6b8", 7)}
  ${line([[ux(630), uy(1003)], [ux(677), uy(946)]], "#ead6b8", 7)}
  <circle cx=${ux(628)} cy=${uy(1003)} r="7" fill="#a09c96"/><circle cx=${ux(622)} cy=${uy(1032)} r="6.5" fill="#b5b5b3"/><circle cx=${ux(631)} cy=${uy(1061)} r="4" fill="#c8c8c6"/>
  <circle cx=${ux(593)} cy=${uy(585)} r="16" fill=${STAGE[6]} stroke="#b49089" stroke-width="1.5"/>${t(ux(593), uy(585) + 10, 28, "6", { f: "#fff", a: "middle" })}`;

/* ---------- annotation layer ---------- */
const box = (x0: number, y0: number, x1: number, y1: number, fill = "none", w = 10) =>
  svg`<rect x=${x0 + w / 2} y=${y0 + w / 2} width=${x1 - x0 - w} height=${y1 - y0 - w} rx="10" fill=${fill} stroke=${CALL} stroke-width=${w} filter="url(#soft)"/>`;
const INTER = "Inter, 'Liberation Sans', sans-serif";
const small: [string, number, number][] = [["a1", 55.7, 409], ["a2", 55.7, 921], ["a3", 47, 1576], ["a4", 806.7, 1059], ["b1", 3169.5, 318], ["b2", 2699, 477], ["b3", 1428, 640], ["b4", 2466.5, 315.5], ["c1", 918, 1991], ["c2", 2620, 1856], ["d1", 3521.5, 946], ["d2", 3782, 946], ["d3", 4001, 946]];
const big: [string, number, number][] = [["A", 58, 166.6], ["B", 907, 167], ["C", 917, 951], ["D", 3421, 167]];
const softDefs = () => svg`<defs><filter id="soft" x="-20%" y="-20%" width="140%" height="140%"><feDropShadow dx="3" dy="8" stdDeviation="7" flood-color="#000" flood-opacity=".25"/></filter></defs>`;

const annotations = () => svg`${softDefs()}
  <polyline points="1142,331.5 1346,331.5 1429,597 1484,351" fill="none" stroke="#6e8b90" stroke-width="11" stroke-linejoin="miter" filter="url(#soft)"/>
  ${box(2416, 215, 2516, 283, "#fff", 11)}${r(2433, 231, 73, 34, "#fff", { s: "#a9adab", sw: 2.4 })}${t(2440, 258, 28, "0.28", { f: "#777" })}
  ${box(624, 962, 852, 1030, "#fff")}${t(643.5, 1004, 27.4, "Similarity:", { f: "#999" })}${r(773, 978, 68, 32, "#fff", { s: "#b9bdbb", sw: 2.4 })}${t(781, 1004, 27, "0.49", { f: "#999" })}
  ${box(2564, 479, 2842, 1010, "#fff")}${temporal()}
  ${box(898, 2013, 2021, 2271, "#fff", 11)}${sankey()}<path d="M1797,2014h84v14h-84z" fill="#6c7b78" opacity=".6"/>
  ${box(2615, 1847, 3338, 2255, "#fff")}${detailCards.map((c, i) => card(c, 2681 + i * 211.9, 1881.7, 0.584))}
  <polygon points="3970,1068 4033,1068 3955,1172 3775,1172" fill="#8a8d8b" opacity=".32"/>
  ${box(3406, 987, 3627, 1071)}${box(3627, 987, 3970, 1071)}${box(3970, 987, 4039, 1071)}
  ${box(3750, 1169, 3968, 1372, "#fff")}
  ${r(3776, 1190, 80, 63, GREEN)}${r(3776, 1253, 80, 100, PINK)}${r(3860, 1190, 79, 56, GREEN)}${r(3860, 1246, 79, 107, PINK)}
  ${small.map(([s, x, y]) => svg`<circle cx=${x} cy=${y} r="43" fill="#fff" stroke=${RING} stroke-width="8"/>${t(x, y + 20, 56, s, { a: "middle", f: RING, b: 500, ff: INTER })}`)}
  ${big.map(([s, x, y]) => svg`<circle cx=${x} cy=${y} r="53.5" fill=${RING}/>${t(x, y + 31, 87, s, { a: "middle", f: "#fff", b: 500, ff: INTER })}`)}`;

/* ---------- pattern rows: path, bar lengths, score, tone, recovery share per half ---------- */
const patterns: [number[], number, number, string, string, number, number][] = [
  [[3], 378, 388, "2", "p", .53, .46], [[1], 424, 341, "17.0", "g", .6, .53], [[2], 356, 347, "1.8", "g", .55, .5], [[5], 330, 318, "12.2", "p", .4, .42],
  [[6], 238, 321, "16.9", "p", .37, .33], [[4], 252, 294, "8.3", "p", .36, .26], [[1, 3], 180, 127, "10.6", "g", .54, .54], [[1, 1], 172, 123, "9.4", "g", .68, .61],
  [[2, 1], 170, 117, "11.1", "g", .64, .64], [[3, 1], 175, 109, "12.4", "g", .56, .64], [[1, 2], 137, 103, "7.0", "g", .65, .65], [[5, 6], 79, 144, "13", "p", .35, .21],
  [[2, 3], 105, 103, "0.4", "g", .6, .55], [[1, 4], 98, 103, "1", "p", .55, .45], [[5, 1], 97, 103, "1.2", "p", .5, .53], [[4, 3], 75, 123, "9.8", "p", .38, .41],
  [[3, 5], 74, 123, "10", "p", .48, .22], [[2, 5], 85, 110, "5", "p", .48, .27], [[6, 5], 73, 117, "8.8", "p", .3, .17], [[5, 2], 82, 103, "4.2", "p", .44, .51],
  [[5, 5], 53, 131, "15.6", "p", .31, .14], [[5, 3], 79, 103, "4.8", "p", .45, .51], [[3, 4], 67, 103, "7.4", "p", .47, .27], [[1, 5], 91, 76, "3.3", "g", .48, .21],
];

class AppRoot extends LitElement {
  static styles = css`
    :host { display: block; width: 4096px; height: 2310px; font-family: "Liberation Sans", Arial, sans-serif; color: #111; background: #fff; }
    * { box-sizing: border-box; }
    svg { display: block; }
    .page { position: relative; display: flex; flex-direction: column; width: 4096px; height: 2310px; background: #ebebea; border-radius: 32px; overflow: hidden; }
    .top { height: 162px; flex: none; display: flex; align-items: center; background: #353535; border-bottom: 2px solid #fff; color: #fff; font-weight: 700; padding: 8px 9px 0 60px; }
    .brand { font-size: 81px; flex: 1; margin: -2px 0 0 -2px; }
    .ctl { display: flex; align-items: center; font-size: 54.5px; white-space: nowrap; }
    .ctl span { color: #f5f5f5; margin-top: -9px; }
    .pick { display: flex; align-items: center; justify-content: space-between; height: 83px; background: #fff; color: #1c1c1c; font-weight: 400; font-size: 51px; padding: 4px 11px 0 12px; margin: 0 0 0 auto; border-bottom: 2px solid #8b9090; }
    .pick svg { width: 26px; height: 18px; }
    .c1 { width: 641px; margin-right: 154px; } .c1 .pick { width: 282px; }
    .c2 { width: 650px; margin-right: 95px; } .c2 .pick { width: 442px; }
    .c3 { width: 658px; } .c3 .pick { width: 442px; }
    .main { flex: 1; display: grid; grid-template-columns: 833px 2511px 664px; column-gap: 21px; padding: 30px 17px 0 23px; align-items: start; }
    .mid { display: flex; flex-direction: column; gap: 8px; }
    .panel { background: #fff; outline: 3px solid #d5d6d5; }
    .a, .d { height: 2090px; } .b { height: 778px; } .c { height: 1307px; }
    .d { margin-left: 3px; width: 664px; }
    .head { display: grid; align-items: center; height: 97px; border-bottom: 3px solid #d5d6d5; font-weight: 700; white-space: nowrap; }
    .a .head { grid-template-columns: 506px 41px 220px auto; padding: 0 0 4px 14px; }
    .b .head { grid-template-columns: 492px 42px 231px 273px 28px 598px 245px 483px auto; padding: 5px 0 0 20px; }
    .c .head { grid-template-columns: 656px 45px 333px 40px 1299px auto; padding: 0 0 2px 23px; height: 103px; }
    .d .head { grid-template-columns: 300px 28px 107px 28px 127px auto; padding: 0 0 3px 17px; }
    .title { font-size: 45.5px; color: #333; }
    .a .title, .d .title { font-size: 44.4px; }
    .c .title { font-size: 46.2px; }
    .lab { font-size: 37px; }
    .a .lab { font-size: 35.3px; } .c .lab { font-size: 37.8px; } .d .lab { font-size: 30px; }
    .up { margin-top: -8px; }
    .arrow { font-size: 47px; line-height: 30px; }
    .chk { width: 31px; height: 31px; border: 3.5px solid #222; background: #fff; }
    .chk.on { background: #cbcbcb; } .chk.rec { background: #b0bfb9; border-color: #444; }
    .sw { width: 24px; height: 24px; } .g { background: #b0bfb9; } .p { background: #f2cac4; }
    .help { width: 32px; height: 32px; margin-top: -7px; }
    .dots { display: flex; gap: 25px; }
    .dot { width: 41px; height: 41px; border-radius: 50%; color: #fff; font-size: 32px; line-height: 39px; text-align: center; border: 2px solid #dcdcd8; }
    .band { height: 64px; margin: 2px 4px 0 0; background: #efefef; text-align: center; font-size: 44.3px; line-height: 64px; padding-right: 28px; }
    .band.res { height: 61px; margin-top: 13px; line-height: 61px; }
    .form { display: grid; grid-template-columns: 306px 349px; height: 277px; }
    .names { font-size: 41.7px; line-height: 70px; padding: 6px 0 0 6px; white-space: nowrap; }
    .opts { padding-top: 14px; display: flex; flex-direction: column; gap: 12.5px; }
    .opt { height: 54.8px; border: 3px solid #cfcfcf; border-radius: 6px; display: flex; align-items: center; justify-content: space-between; font-size: 38.7px; padding: 0 13px; }
    .opt svg { width: 34px; height: 22px; }
    .list { padding: 30px 0 0 4px; }
    .row { height: 64.27px; display: grid; grid-template-columns: 207px 12px 210px 20px 85px 20px 56px; align-items: center; }
    .row.s { margin-left: 5px; padding-top: 7px; } .row.s .track, .row.s .bars { background: #f2f0ea; } .row.s .num { background: #faf9f3; }
    .row.n { margin-left: 4px; }
    .track { height: 40px; background: #f8f8f8; display: flex; align-items: center; padding-left: 7px; }
    .node { width: 33px; height: 35px; border-radius: 50%; color: #fff; font-weight: 700; font-size: 28px; line-height: 35px; text-align: center; }
    .wire { width: 45px; height: 2.6px; background: #5c6060; }
    .bars { height: 40px; background: #f8f8f8; grid-column: 3; }
    .bars i { display: block; height: 20px; }
    .num { grid-column: 5; height: 39px; margin-top: -8px; border: 3px solid; font-size: 34.5px; line-height: 33px; padding-left: 6px; white-space: nowrap; }
    .num.tp { color: #f2cac4; } .num.tg { color: #b0bfb9; }
    .pair { grid-column: 7; height: 56px; display: grid; grid-template-columns: 1fr 1fr; gap: 1px; }
    .half { background: #f2cac4; } .half i { display: block; background: #b0bfb9; }
    .thumb { position: absolute; left: 4076px; top: 712px; width: 7px; height: 439px; background: #a2ada6; }
    .over { position: absolute; left: 0; top: 0; }
  `;

  chev(w = 3) {
    return html`<svg viewBox="0 0 34 22"><path d="M4,5 L17,17 L30,5" fill="none" stroke="#111" stroke-width=${w} /></svg>`;
  }

  render() {
    return html`<div class="page">
      <div class="top">
        <div class="brand">EMINDS</div>
        <div class="ctl c1"><span>time window:</span><div class="pick">2 weeks ${this.chev(5)}</div></div>
        <div class="ctl c2"><span>group1:</span><div class="pick">2020_MHOT ${this.chev(5)}</div></div>
        <div class="ctl c3"><span>group2:</span><div class="pick">2020_MHSW ${this.chev(5)}</div></div>
      </div>
      <div class="main">
        <section class="panel a">
          <div class="head"><span class="title">Behavior Cluster View</span><i class="chk on"></i><span class="lab">boxplot</span>${help()}</div>
          <svg width="833" height="1993" viewBox="23 289 833 1993">${clusterChart()}</svg>
        </section>
        <div class="mid">
          <section class="panel b">
            <div class="head"><span class="title">Behavior Stage View</span><i class="chk"></i><span class="lab up">temporal</span><span class="lab">stage number:</span><span class="lab">6</span>
              <svg width="480" height="50" viewBox="1964 217 480 50">${slider(1979, 2412, 247, 2275, 17)}</svg>
              <span class="lab">negativity<span class="arrow">↑</span>:</span>
              <div class="dots">${[1, 2, 3, 4, 5, 6].map((n) => html`<div class="dot" style="background:${STAGE[n]}">${n}</div>`)}</div>${help()}</div>
            <svg width="2511" height="681" viewBox="877 289 2511 681">${softDefs()}${stageChart()}</svg>
          </section>
          <section class="panel c">
            <div class="head"><span class="title">Behavior Progression View</span><i class="chk rec"></i><span class="lab">Recovery Group</span><i class="chk"></i><span class="lab">Deterioration Group</span>${help()}</div>
            <svg width="2511" height="1204" viewBox="877 1081 2511 1204">${softDefs()}${progressionChart()}</svg>
          </section>
        </div>
        <section class="panel d">
          <div class="head"><span class="title">Pattern View</span><i class="sw g"></i><span class="lab">G(R)</span><i class="sw p"></i><span class="lab">G(D)</span>${help()}</div>
          <div class="band">selection pannel</div>
          <div class="form">
            <div class="names"><div>start stage:</div><div>end stage:</div><div>frequency type:</div><div>sort rule:</div></div>
            <div class="opts">${["none", "none", "frequency", "descending"].map((s) => html`<div class="opt">${s} ${this.chev(6.5)}</div>`)}</div>
          </div>
          <div class="band res">pattern result</div>
          <div class="list">${patterns.map(([seq, g, p, v, tone, a, b], i) => html`<div class="row ${i === 4 ? "s" : i === 6 ? "n" : ""}">
            <div class="track">${seq.map((n, j) => html`${j ? html`<div class="wire"></div>` : ""}<div class="node" style="background:${STAGE[n]}">${n}</div>`)}</div>
            <div class="bars"><i class="g" style="width:${g * 0.4566}px"></i><i class="p" style="width:${p * 0.4566}px"></i></div>
            <div class="num t${tone}">${v}</div>
            <div class="pair"><div class="half"><i style="height:${a * 100}%"></i></div><div class="half"><i style="height:${b * 100}%"></i></div></div>
          </div>`)}</div>
        </section>
      </div>
      <div class="thumb"></div>
      <svg class="over" width="4096" height="2310" viewBox="0 0 4096 2310">${annotations()}</svg>
    </div>`;
  }
}
customElements.define("app-root", AppRoot);
